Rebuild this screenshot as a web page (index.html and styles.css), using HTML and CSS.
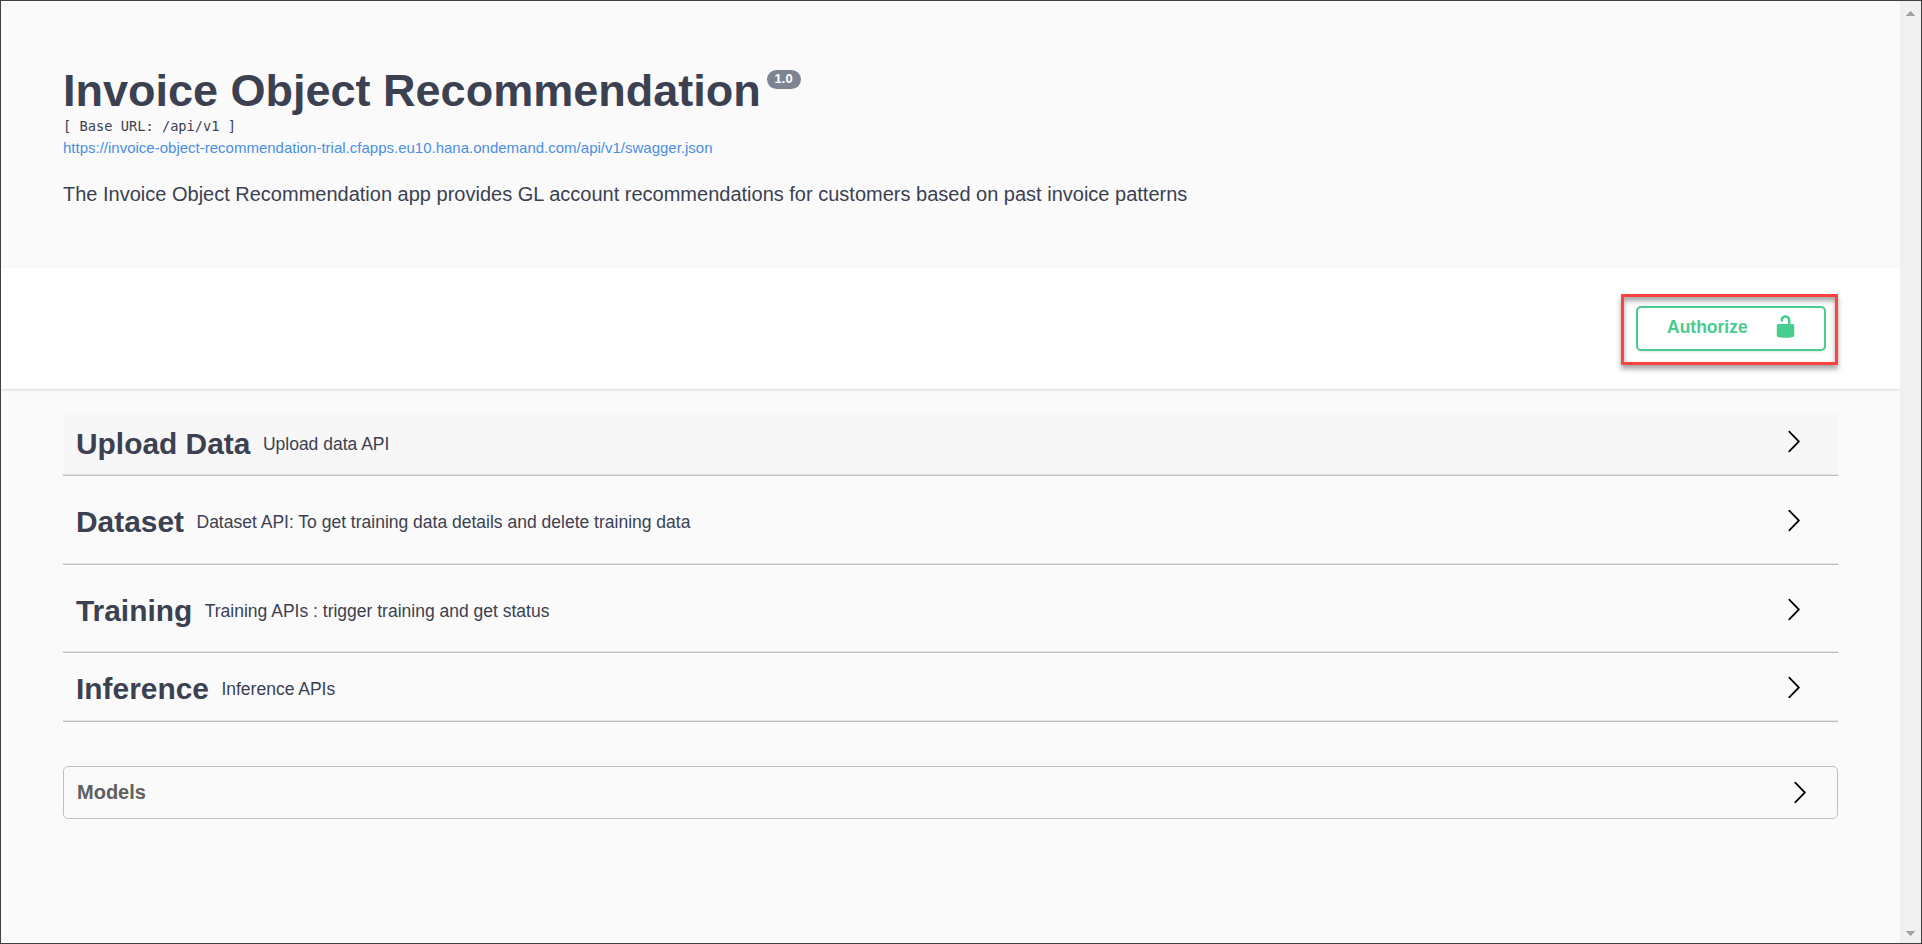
FILE: index.html
```
<!DOCTYPE html>
<html lang="en">
<head>
<meta charset="utf-8">
<title>Invoice Object Recommendation</title>
<link rel="stylesheet" href="styles.css">
</head>
<body>
<svg width="0" height="0" class="defs">
  <symbol id="chevron" viewBox="0 0 20 20"><path d="M13.25 10L6.109 2.58c-.268-.27-.268-.707 0-.979.268-.27.701-.27.969 0l7.83 7.908c.268.271.268.709 0 .979l-7.83 7.908c-.268.271-.701.27-.969 0-.268-.269-.268-.707 0-.979L13.25 10z"/></symbol>
</svg>
<div class="window">
  <main class="page">
    <header class="info">
      <h1 class="title"><span class="title-text">Invoice Object Recommendation</span><span class="version">1.0</span></h1>
      <div class="base-url">[ Base URL: /api/v1 ]</div>
      <a class="spec-link" href="#"><span>https://invoice-object-recommendation-trial.cfapps.eu10.hana.ondemand.com/api/v1/swagger.json</span></a>
      <p class="description">The Invoice Object Recommendation app provides GL account recommendations for customers based on past invoice patterns</p>
    </header>
    <div class="scheme">
      <div class="highlight">
        <button class="authorize"><span class="authorize-text">Authorize</span>
          <svg class="icon" viewBox="0 0 20 20"><path d="M15.8 8H14V5.6C14 2.703 12.665 1 10 1 7.334 1 6 2.703 6 5.6V6h2v-.801C8 3.754 8.797 3 10 3c1.203 0 2 .754 2 2.199V8H4c-.553 0-1 .646-1 1.199V17c0 .549.428 1.139.951 1.307l1.197.387C5.672 18.861 6.55 19 7.1 19h5.8c.549 0 1.428-.139 1.951-.307l1.196-.387c.524-.167.953-.757.953-1.306V9.199C17 8.646 16.352 8 15.8 8z"/></svg>
        </button>
      </div>
    </div>
    <section class="tags">
      <div class="tag tag-hover"><h2>Upload Data</h2><small>Upload data API</small><svg class="icon"><use href="#chevron"/></svg></div>
      <div class="tag tag-tall"><h2>Dataset</h2><small>Dataset API: To get training data details and delete training data</small><svg class="icon"><use href="#chevron"/></svg></div>
      <div class="tag tag-tall tag-training"><h2>Training</h2><small>Training APIs : trigger training and get status</small><svg class="icon"><use href="#chevron"/></svg></div>
      <div class="tag tag-last"><h2>Inference</h2><small>Inference APIs</small><svg class="icon"><use href="#chevron"/></svg></div>
    </section>
    <section class="models"><h3>Models</h3><svg class="icon"><use href="#chevron"/></svg></section>
  </main>
  <aside class="scrollbar">
    <svg width="9" height="5" viewBox="0 0 9 5" shape-rendering="crispEdges"><path d="M4 0h1v1h1v1h1v1h1v1h1v1H0V4h1V3h1V2h1V1h1z"/></svg>
    <svg width="9" height="5" viewBox="0 0 9 5" shape-rendering="crispEdges"><path d="M0 0h9v1H8v1H7v1H6v1H5v1H4V4H3V3H2V2H1V1H0z"/></svg>
  </aside>
</div>
</body>
</html>
```
FILE: styles.css
```
* { box-sizing: border-box; }
body {
  margin: 0;
  font-family: "Liberation Sans", Arial, sans-serif;
  color: #3b4151;
}
.defs { display: block; }
h1, h2, h3, p { margin: 0; }
.window {
  display: flex;
  width: 1922px;
  height: 944px;
  border: 1px solid #414042;
  background: #fafafa;
  overflow: hidden;
}
.page { flex: 1; }
.scrollbar {
  width: 21px;
  background: #f0f0f0;
  display: flex;
  flex-direction: column;
  justify-content: space-between;
  align-items: center;
  padding: 10px 0 7px;
  fill: #a3a3a3;
}
.icon { width: 25px; height: 25px; flex: none; }

.info { height: 267px; padding: 64px 62px 0; }
.title {
  display: flex;
  align-items: flex-start;
  height: 51px;
  font-size: 45px;
  line-height: 52px;
}
.version {
  width: 34px;
  height: 19px;
  margin: 5px 0 0 6px;
  border-radius: 10px;
  background: #7d8492;
  color: #fff;
  font-size: 13px;
  line-height: 17px;
  text-align: center;
}
.base-url {
  font-family: "DejaVu Sans Mono", monospace;
  font-size: 13.7px;
  line-height: 20px;
}
.spec-link {
  display: block;
  font-size: 15px;
  line-height: 24px;
  color: #4990e2;
  text-decoration: none;
}
.description { margin-top: 22px; font-size: 20px; line-height: 24px; }

.scheme {
  height: 121px;
  padding: 26px 62px 0;
  display: flex;
  justify-content: flex-end;
  align-items: flex-start;
  background: #fff;
  box-shadow: 0 1px 2px rgba(0, 0, 0, .15);
}
.highlight {
  width: 217px;
  height: 71px;
  padding: 9px 9px 0 12px;
  border: 3px solid #ff4242;
  box-shadow: 0 4px 5px rgba(0, 0, 0, .35), inset 0 4px 5px rgba(0, 0, 0, .35);
}
.authorize {
  display: flex;
  align-items: center;
  width: 190px;
  height: 45px;
  padding: 0 26px 0 29px;
  justify-content: space-between;
  border: 2px solid #49cc90;
  border-radius: 5px;
  background: #fff;
  color: #49cc90;
  font: bold 17.5px "Liberation Sans", Arial, sans-serif;
  fill: #49cc90;
  box-shadow: 0 1px 2px rgba(0, 0, 0, .1);
}
.authorize .icon { margin-bottom: 5px; }
.authorize-text { margin-bottom: 3px; }

.tags { padding: 25px 62px 0; }
.tag {
  display: flex;
  align-items: center;
  height: 62px;
  padding: 0 32px 2px 13px;
  border-bottom: 1px solid #bdbec2;
  box-shadow: inset 0 -1px #e6e6e8;
}
.tag h2 { font-size: 29.9px; line-height: 38px; }
.tag small { flex: 1; padding-left: 12.5px; font-size: 17.5px; line-height: 24px; }
.tag .icon { margin-bottom: 4px; }
.tag-hover { background: #f7f7f7; }
.tag-tall { height: 89px; padding-top: 6px; }
.tag-training { height: 88px; padding-top: 7px; }
.tag-last { height: 69px; padding-top: 6px; }
.models {
  display: flex;
  align-items: center;
  justify-content: space-between;
  height: 53px;
  margin: 44px 62px 0;
  padding: 0 25px 0 13px;
  border: 1px solid #bfc0c3;
  border-radius: 5px;
}
.models h3 { margin-bottom: 2px; font-size: 20px; line-height: 24px; color: #606060; }
```
